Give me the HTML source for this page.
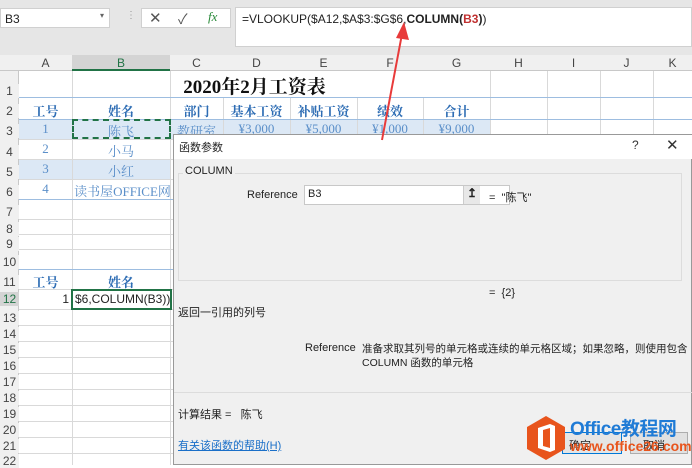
<!DOCTYPE html><html><head><meta charset="utf-8"><style>
*{margin:0;padding:0;box-sizing:border-box}
body{width:692px;height:465px;overflow:hidden;position:relative;background:#fff;font-family:"Liberation Sans","Noto Sans CJK SC",sans-serif;font-size:12px;color:#222}
.a{position:absolute;white-space:nowrap}
.ser{font-family:"Liberation Serif","Noto Serif CJK SC",serif}
.vl{position:absolute;width:1px;background:#d9d9d9}
.hl{position:absolute;height:1px;background:#d9d9d9}
.rh{position:absolute;left:0;width:19px;text-align:center;color:#444;font-size:12px;background:#f0f0f0}
.ch{position:absolute;top:55px;height:16px;text-align:center;color:#444;font-size:12px;line-height:16px}
.c{position:absolute;text-align:center;color:#5b8fc9;font-size:13px;white-space:nowrap}
.b{font-weight:bold;color:#2e6db4}
</style></head><body>
<div class="a" style="left:0;top:0;width:692px;height:55px;background:#e6e6e6"></div>
<div class="a" style="left:0;top:8px;width:110px;height:20px;background:#fff;border:1px solid #d0d0d0;padding:3px 4px;font-size:12px">B3<span style="position:absolute;right:5px;top:2px;font-size:8px;color:#666">▾</span></div>
<div class="a" style="left:126px;top:10px;color:#999;font-size:10px">⋮</div>
<div class="a" style="left:141px;top:8px;width:90px;height:20px;background:#fff;border:1px solid #d0d0d0"></div>
<div class="a" style="left:149px;top:9px;font-size:15px;color:#555">✕</div>
<div class="a" style="left:178px;top:9px;font-size:14px;color:#555">✓</div>
<div class="a ser" style="left:208px;top:9px;font-size:13px;color:#2a8a3a;font-style:italic">fx</div>
<div class="a" style="left:235px;top:7px;width:457px;height:40px;background:#fff;border:1px solid #d0d0d0"></div>
<div class="a" style="left:242px;top:12px;font-size:12px">=VLOOKUP($A12,$A$3:$G$6,<b>COLUMN(<span style="color:#c03030">B3</span>)</b>)</div>
<div class="a" style="left:0;top:55px;width:692px;height:16px;background:#f0f0f0;border-bottom:1px solid #c8c8c8"></div>
<div class="a" style="left:72px;top:55px;width:98px;height:16px;background:#d4d4d4;border-bottom:2px solid #217346"></div>
<div class="ch" style="left:19px;width:53px">A</div><div class="ch" style="left:72px;width:98px;color:#217346">B</div><div class="ch" style="left:170px;width:53px">C</div><div class="ch" style="left:223px;width:67px">D</div><div class="ch" style="left:290px;width:67px">E</div><div class="ch" style="left:357px;width:66px">F</div><div class="ch" style="left:423px;width:67px">G</div><div class="ch" style="left:490px;width:57px">H</div><div class="ch" style="left:547px;width:53px">I</div><div class="ch" style="left:600px;width:53px">J</div><div class="ch" style="left:653px;width:39px">K</div>
<div class="a" style="left:0;top:71px;width:19px;height:394px;background:#f0f0f0;border-right:1px solid #c8c8c8"></div>
<div class="a" style="left:19px;top:119px;width:471px;height:20px;background:#dce8f5"></div>
<div class="a" style="left:19px;top:159px;width:151px;height:20px;background:#dce8f5"></div>
<div class="vl" style="left:72px;top:71px;height:394px"></div><div class="vl" style="left:170px;top:71px;height:394px"></div>
<div class="vl" style="left:223px;top:97px;height:40px"></div><div class="vl" style="left:290px;top:97px;height:40px"></div><div class="vl" style="left:357px;top:97px;height:40px"></div><div class="vl" style="left:423px;top:97px;height:40px"></div>
<div class="vl" style="left:490px;top:71px;height:65px"></div><div class="vl" style="left:547px;top:71px;height:65px"></div><div class="vl" style="left:600px;top:71px;height:65px"></div><div class="vl" style="left:653px;top:71px;height:65px"></div>
<div class="hl" style="left:19px;top:97px;width:673px;background:#9dbde0"></div>
<div class="hl" style="left:19px;top:119px;width:673px;background:#9dbde0"></div>
<div class="hl" style="left:19px;top:139px;width:673px"></div>
<div class="hl" style="left:19px;top:159px;width:154px"></div><div class="hl" style="left:19px;top:179px;width:154px"></div><div class="hl" style="left:19px;top:199px;width:154px;background:#9dbde0"></div>
<div class="hl" style="left:19px;top:219px;width:154px"></div><div class="hl" style="left:19px;top:234px;width:154px"></div><div class="hl" style="left:19px;top:249px;width:154px"></div><div class="hl" style="left:19px;top:269px;width:154px;background:#9dbde0"></div><div class="hl" style="left:19px;top:289px;width:154px"></div><div class="hl" style="left:19px;top:309px;width:154px"></div>
<div class="hl" style="left:19px;top:325px;width:154px"></div><div class="hl" style="left:19px;top:341px;width:154px"></div><div class="hl" style="left:19px;top:357px;width:154px"></div><div class="hl" style="left:19px;top:373px;width:154px"></div><div class="hl" style="left:19px;top:389px;width:154px"></div><div class="hl" style="left:19px;top:405px;width:154px"></div><div class="hl" style="left:19px;top:421px;width:154px"></div><div class="hl" style="left:19px;top:437px;width:154px"></div><div class="hl" style="left:19px;top:453px;width:154px"></div>
<div class="rh" style="top:84px">1</div><div class="rh" style="top:104px">2</div><div class="rh" style="top:124px">3</div><div class="rh" style="top:145px">4</div><div class="rh" style="top:165px">5</div><div class="rh" style="top:185px">6</div><div class="rh" style="top:205px">7</div><div class="rh" style="top:222px">8</div><div class="rh" style="top:237px">9</div><div class="rh" style="top:255px">10</div><div class="rh" style="top:275px">11</div><div class="rh" style="top:292px;color:#217346;background:#d4d4d4">12</div><div class="rh" style="top:311px">13</div><div class="rh" style="top:327px">14</div><div class="rh" style="top:343px">15</div><div class="rh" style="top:359px">16</div><div class="rh" style="top:375px">17</div><div class="rh" style="top:391px">18</div><div class="rh" style="top:407px">19</div><div class="rh" style="top:423px">20</div><div class="rh" style="top:439px">21</div><div class="rh" style="top:454px">22</div>
<div class="a ser" style="left:19px;top:72px;width:471px;text-align:center;font-size:19px;font-weight:bold;color:#111">2020年2月工资表</div>
<div class="c ser b" style="left:19px;top:101px;width:53px">工号</div><div class="c ser b" style="left:72px;top:101px;width:98px">姓名</div><div class="c ser b" style="left:170px;top:101px;width:53px">部门</div><div class="c ser b" style="left:223px;top:101px;width:67px">基本工资</div><div class="c ser b" style="left:290px;top:101px;width:67px">补贴工资</div><div class="c ser b" style="left:357px;top:101px;width:66px">绩效</div><div class="c ser b" style="left:423px;top:101px;width:67px">合计</div>
<div class="c ser" style="left:19px;top:121px;width:53px">1</div><div class="c ser" style="left:72px;top:121px;width:98px">陈飞</div><div class="c ser" style="left:170px;top:121px;width:53px">教研室</div><div class="c ser" style="left:223px;top:121px;width:67px">¥3,000</div><div class="c ser" style="left:290px;top:121px;width:67px">¥5,000</div><div class="c ser" style="left:357px;top:121px;width:66px">¥1,000</div><div class="c ser" style="left:423px;top:121px;width:67px">¥9,000</div>
<div class="a" style="left:72px;top:119px;width:99px;height:20px;border:2px dashed #217346"></div>
<div class="c ser" style="left:19px;top:141px;width:53px">2</div><div class="c ser" style="left:72px;top:141px;width:98px">小马</div>
<div class="c ser" style="left:19px;top:161px;width:53px">3</div><div class="c ser" style="left:72px;top:161px;width:98px">小红</div>
<div class="c ser" style="left:19px;top:181px;width:53px">4</div><div class="c ser" style="left:72px;top:181px;width:101px">读书屋OFFICE网</div>
<div class="c ser b" style="left:19px;top:272px;width:53px">工号</div><div class="c ser b" style="left:72px;top:272px;width:98px">姓名</div>
<div class="a" style="left:19px;top:292px;width:50px;text-align:right;font-size:12px">1</div>
<div class="a" style="left:71px;top:289px;width:101px;height:21px;border:2px solid #217346;padding:1px 2px;font-size:12px;overflow:hidden">$6,COLUMN(B3))</div>
<div class="a" style="left:173px;top:134px;width:519px;height:331px;background:#f0f0f0;border:1px solid #999"></div>
<div class="a" style="left:174px;top:135px;width:518px;height:24px;background:#fff"></div>
<div class="a" style="left:179px;top:139px;font-size:11px">函数参数</div>
<div class="a" style="left:632px;top:138px;font-size:12px;color:#333">?</div>
<div class="a" style="left:666px;top:136px;font-size:15px;color:#333">✕</div>
<div class="a" style="left:178px;top:173px;width:504px;height:108px;border:1px solid #dcdcdc"></div>
<div class="a" style="left:183px;top:165px;font-size:11px;background:#f0f0f0;padding:0 2px">COLUMN</div>
<div class="a" style="left:247px;top:189px;font-size:11px">Reference</div>
<div class="a" style="left:304px;top:185px;width:206px;height:20px;background:#fff;border:1px solid #c8c8c8;padding:2px 3px;font-size:11px">B3</div>
<div class="a" style="left:463px;top:186px;width:17px;height:18px;background:#e8e8e8;border-left:1px solid #ccc;text-align:center;font-size:12px;font-weight:bold">↥</div>
<div class="a" style="left:489px;top:189px;font-size:11px">= &nbsp;"陈飞"</div>
<div class="a" style="left:489px;top:287px;font-size:11px">= &nbsp;{2}</div>
<div class="a" style="left:178px;top:304px;font-size:11px">返回一引用的列号</div>
<div class="a" style="left:305px;top:342px;font-size:11px">Reference</div>
<div class="a" style="left:362px;top:342px;font-size:10.5px;line-height:14px">准备求取其列号的单元格或连续的单元格区域；如果忽略，则使用包含<br>COLUMN 函数的单元格</div>
<div class="hl" style="left:174px;top:392px;width:518px;background:#dcdcdc"></div>
<div class="a" style="left:178px;top:406px;font-size:11px">计算结果 = &nbsp; 陈飞</div>
<div class="a" style="left:178px;top:437px;font-size:11px;color:#1a6fc8;text-decoration:underline">有关该函数的帮助(H)</div>
<div class="a" style="left:562px;top:432px;width:60px;height:22px;border:1px solid #0078d7;background:#e5e5e5;font-size:11px;padding:4px 6px">确定</div>
<div class="a" style="left:630px;top:432px;width:58px;height:22px;border:1px solid #adadad;background:#e1e1e1;font-size:11px;padding:4px 12px">取消</div>
<svg class="a" style="left:526px;top:415px" width="40" height="46" viewBox="0 0 40 46"><polygon points="20,1 39,12 39,34 20,45 1,34 1,12" fill="#e8541c"/><path d="M12 13 L24 9 L29 11 L29 35 L24 37 L12 33 Z M17 15 V31 L24 33 V13 Z" fill="#fff" fill-rule="evenodd"/></svg>
<div class="a" style="left:570px;top:414px;font-size:19px;font-weight:bold;color:#1f7bd6;letter-spacing:-0.5px">Office教程网</div>
<div class="a" style="left:570px;top:438px;font-size:14px;font-weight:bold;color:#e8541c">www.office26.com</div>
<svg class="a" style="left:0;top:0" width="692" height="465"><line x1="382" y1="140" x2="402" y2="34" stroke="#e83a3a" stroke-width="2"/><polygon points="404,22 396,38 409,40" fill="#e83a3a"/></svg>
</body></html>
